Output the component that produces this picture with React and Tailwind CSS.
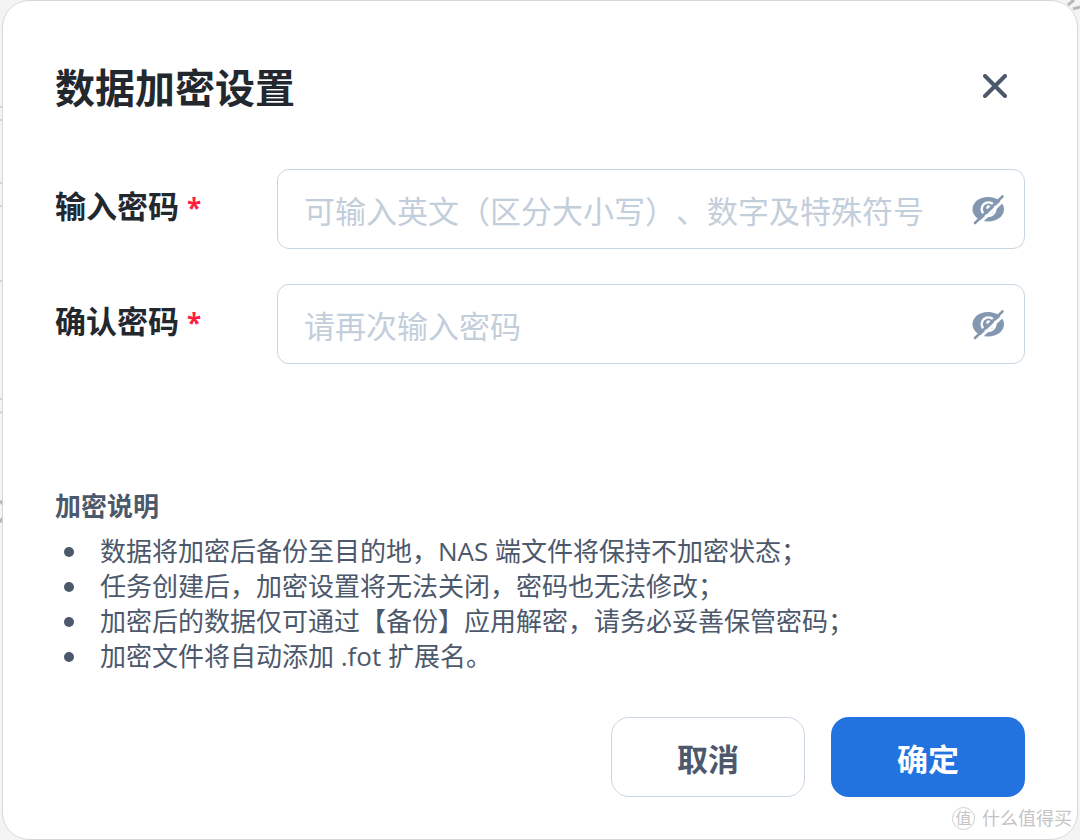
import { useState } from "react";

function EyeOffIcon() {
  return (
    <svg viewBox="0 0 36 32" className="h-8 w-9" fill="none" aria-hidden="true">
      <path d="M18 4C9 4 2.500 9.500 2.500 16.200S9 28.500 18 28.500S34 23 34 16.200S27 4 18 4Z" fill="#8497b0" />
      <circle cx="18.500" cy="16.200" r="8" fill="#fff" />
      <circle cx="18.500" cy="16.200" r="5.600" fill="#8497b0" />
      <circle cx="18.500" cy="14.500" r="2.200" fill="#fff" />
      <path d="M7 32.500L36 5" stroke="#fff" strokeWidth="3" />
      <path d="M5 30L32.500 3.500" stroke="#8497b0" strokeWidth="2.600" strokeLinecap="round" />
    </svg>
  );
}

function PasswordField({ id, label, placeholder }) {
  const [visible, setVisible] = useState(false);
  return (
    <div className="flex h-20 items-center">
      <label htmlFor={id} className="w-[222px] shrink-0 pb-1 text-[31px] leading-10 font-bold text-[#23272e]">
        {label} <span className="text-[26px] text-[#ff1c3d]">*</span>
      </label>
      <div className="flex h-20 min-w-0 flex-1 items-center rounded-xl border border-[#c9d5e3] pr-[18px] pl-[26px]">
        <input
          id={id}
          type={visible ? "text" : "password"}
          placeholder={placeholder}
          required
          className="h-full min-w-0 flex-1 bg-transparent pt-1 text-[31px] text-[#23272e] outline-none [text-spacing-trim:space-all] placeholder:text-[#c3cedb]"
        />
        <button type="button" aria-label="显示密码" onClick={() => setVisible(!visible)} className="shrink-0">
          <EyeOffIcon />
        </button>
      </div>
    </div>
  );
}

const notes = [
  "数据将加密后备份至目的地，NAS 端文件将保持不加密状态；",
  "任务创建后，加密设置将无法关闭，密码也无法修改；",
  "加密后的数据仅可通过【备份】应用解密，请务必妥善保管密码；",
  "加密文件将自动添加 .fot 扩展名。",
];

export default function App() {
  return (
    <div className="relative flex min-h-screen bg-[#f4f4f4] px-[2px] font-['Open_Sans','Noto_Sans_CJK_SC',sans-serif]">
      <svg className="absolute top-0 left-0 h-[540px] w-1" viewBox="0 0 4 540" fill="none" stroke="#b5b5b5" aria-hidden="true">
        <path d="M0 107H4M0 120H4M0 183H4M0 206H4M0 281H4M0 399H4M0 413L4 410" />
        <path d="M0 501L4 505M0 522L4 517" strokeWidth="3" />
      </svg>
      <svg className="absolute top-0 right-0 h-4 w-4" viewBox="0 0 16 16" fill="none" stroke="#b8b8b8" strokeWidth="3" aria-hidden="true">
        <path d="M4 5L10 0M9 9L16 7" />
      </svg>
      <form
        role="dialog"
        aria-labelledby="dialog-title"
        onSubmit={(e) => e.preventDefault()}
        className="relative flex flex-1 flex-col rounded-[27px] border border-[#d8d8d8] bg-white px-[52px] pt-[57px] pb-[42px]"
      >
        <header className="flex items-center justify-between">
          <h1 id="dialog-title" className="text-[40px] leading-[60px] font-bold text-[#23272e]">数据加密设置</h1>
          <button type="button" aria-label="关闭" className="mr-[10px] mb-1 p-2">
            <svg viewBox="0 0 24 24" className="h-6 w-6" fill="none" stroke="#4c586b" strokeWidth="4" strokeLinecap="round" aria-hidden="true">
              <path d="M2 2L22 22M22 2L2 22" />
            </svg>
          </button>
        </header>

        <div className="mt-[51px] flex flex-col gap-[35px]">
          <PasswordField id="password" label="输入密码" placeholder="可输入英文（区分大小写）、数字及特殊符号" />
          <PasswordField id="confirm" label="确认密码" placeholder="请再次输入密码" />
        </div>

        <section className="mt-auto text-[26px] leading-[35px] text-[#4c586b]">
          <h2 className="mb-[10px] font-bold">加密说明</h2>
          <ul>
            {notes.map((note) => (
              <li key={note} className="flex items-center gap-[26px] pl-[9px]">
                <span className="h-[10px] w-[10px] shrink-0 rounded-full bg-[#4c586b]" />
                <span>{note}</span>
              </li>
            ))}
          </ul>
        </section>

        <footer className="mt-[43px] flex justify-end gap-[26px] text-[31px] font-bold">
          <button type="button" className="h-20 w-[194px] rounded-[18px] border border-[#c9d5e3] pt-1 text-[#4c586b]">取消</button>
          <button type="submit" className="h-20 w-[194px] rounded-[18px] bg-[#2273e0] pt-1 text-white">确定</button>
        </footer>
      </form>
      <div className="absolute right-2 bottom-[10px] flex items-center gap-[7px] text-[18px] leading-6 text-[#c4c4c4]">
        <span className="flex h-[23px] w-[23px] items-center justify-center rounded-full border border-[#d0d0d0] text-[16px]">值</span>
        <span>什么值得买</span>
      </div>
    </div>
  );
}
